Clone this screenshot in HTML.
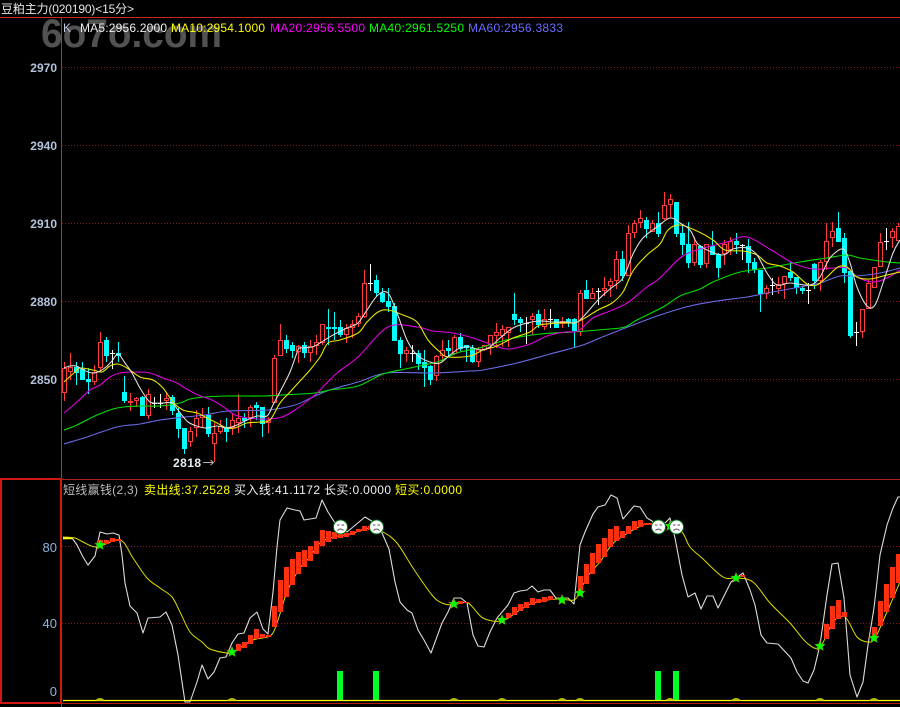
<!DOCTYPE html>
<html lang="zh"><head><meta charset="utf-8"><title>豆粕主力</title>
<style>
html,body{margin:0;padding:0;background:#000;width:900px;height:707px;overflow:hidden}
svg{display:block}
text{font-family:"Liberation Sans","Noto Sans CJK SC",sans-serif;font-size:12px}
.y{font-weight:bold;fill:#b4c4dc;text-anchor:end}
.l{fill:#8fb4e0;text-anchor:end;font-size:13px}
</style></head><body>
<svg id="s" xmlns="http://www.w3.org/2000/svg" width="900" height="707" viewBox="0 0 900 707">
<rect width="900" height="707" fill="#000"/>
<text x="41" y="47" textLength="181" lengthAdjust="spacingAndGlyphs" style="font-size:40px;font-weight:bold" fill="#525252">6o7o.com</text>
<g stroke="#7c1c1c" stroke-dasharray="1 2" stroke-width="1">
<path d="M62 67.5H900M62 145.5H900M62 223.5H900M62 301.5H900M62 379.5H900M62 546.5H900M62 623.5H900"/>
</g>
<g id="candles"></g>
<g fill="none" stroke-width="1.1" stroke-linejoin="round">
<polyline class="sm" stroke="#6a6ae6" points="64,444 87,437 117,427 140,424 160,420 185,417 205,415 228,411 268,410 295,405 315,396 330,390 358,382 387,373 433,373 470,371 483,370 517,363 550,354 583,345 600,338 633,325 660,315 690,306 717,301 747,297 767,293 800,287 820,283 840,276 857,276 880,273 900,268"/>
<polyline class="sm" stroke="#00e000" points="64,430 77,425 97,415 117,408 140,406 160,406 180,403 190,399 205,397 228,396 262,396 282,395 315,393 330,390 358,386 383,374 410,368 437,362 450,356 460,352 483,347 510,339 540,334 573,332 610,329 625,327 637,320 663,307 680,296 700,289 713,282 740,272 767,268 800,262 827,258 847,255 860,258 887,262 900,263"/>
<polyline class="sm" stroke="#e000e0" points="64,413 77,402 90,390 100,385 110,377 120,373 137,372 150,373 163,378 177,383 185,388 198,395 212,400 225,408 235,415 248,418 268,419 282,417 295,410 315,395 320,390 337,373 358,357 388,327 417,327 433,331 453,333 473,338 493,345 508,349 530,344 547,336 565,332 578,331 593,318 610,311 627,303 647,287 660,278 680,258 697,250 727,242 747,237 773,251 793,263 813,269 833,268 847,268 857,277 873,282 887,278 900,270"/>
<polyline class="sm" stroke="#e8e800" points="64,382 75,372 80,368 93,370 102,372 110,366 118,364 127,368 140,377 153,380 163,388 173,402 183,410 197,413 207,418 217,423 227,428 235,428 247,423 260,422 270,420 280,403 290,392 300,381 310,370 320,357 328,343 340,340 358,333 367,322 378,312 388,310 403,315 417,322 428,340 440,352 448,357 470,356 483,350 497,346 513,338 530,332 540,325 560,323 577,322 598,310 612,303 623,292 633,271 647,255 660,244 668,230 680,225 697,231 713,240 725,250 743,251 757,255 767,263 780,266 793,272 807,284 817,285 827,277 838,267 847,267 857,277 870,279 887,275 900,272"/>
<polyline class="sm" stroke="#dcdcdc" points="64,368 70,366 76,366 82,369 88,372 94,373 100,371 106,367 112,361 118,354 125,363 132,373 140,388 148,400 153,403 163,403 172,403 178,410 188,422 200,427 207,428 217,426 227,428 237,425 247,420 257,416 267,416 273,405 282,388 290,372 298,350 300,348 312,347 320,343 333,335 347,328 358,323 367,310 378,295 388,293 397,313 407,340 417,355 430,362 440,363 450,355 460,348 470,347 480,350 490,347 500,338 513,328 527,323 540,321 553,322 567,322 575,323 583,317 598,300 610,289 623,278 633,254 643,238 657,227 670,218 680,223 690,230 697,243 707,250 723,255 733,249 747,248 757,255 767,273 777,285 790,283 810,285 820,277 830,258 843,249 850,263 857,287 867,306 875,305 883,283 893,253 900,240"/>
</g>
<g fill="none" shape-rendering="crispEdges">
<path d="M0 17.5H900" stroke="#c8281e"/>
<path d="M61.5 17V707" stroke="#c8281e"/>
<path d="M0 479.5H900M0 703.5H900" stroke="#b01e14"/>
<rect x="1" y="479" width="60" height="224" stroke="#d0180f" stroke-width="2"/>
</g>
<text x="1" y="13" textLength="133" fill="#e6e6e6">豆粕主力(020190)&lt;15分&gt;</text>
<text x="63" y="32" fill="#c4d0e0">K</text>
<text x="80" y="32" textLength="87" fill="#f0f0f0">MA5:2956.2000</text>
<text x="171" y="32" textLength="94" fill="#ffff00">MA10:2954.1000</text>
<text x="270" y="32" textLength="95" fill="#ff00ff">MA20:2956.5500</text>
<text x="369" y="32" textLength="95" fill="#00ff00">MA40:2961.5250</text>
<text x="468" y="32" textLength="95" fill="#6a6aff">MA60:2956.3833</text>
<text class="y" x="57" y="72">2970</text>
<text class="y" x="57" y="150">2940</text>
<text class="y" x="57" y="228">2910</text>
<text class="y" x="57" y="306">2880</text>
<text class="y" x="57" y="384">2850</text>
<text x="173" y="467" textLength="28" style="font-weight:bold" fill="#e4ecf4">2818</text>
<path d="M203 462.5H213M210.500 460L213.500 462.500L210.500 465" stroke="#b0b0b0" fill="none"/>
<text class="l" x="57" y="552">80</text>
<text class="l" x="57" y="628">40</text>
<text class="l" x="57" y="696">0</text>
<text x="63" y="494" textLength="75" fill="#bcbcbc">短线赢钱(2,3)</text>
<text x="144" y="494" textLength="86" fill="#ffff00">卖出线:37.2528</text>
<text x="234" y="494" textLength="86" fill="#f0f0f0">买入线:41.1172</text>
<text x="324" y="494" textLength="67" fill="#f0f0f0">长买:0.0000</text>
<text x="395" y="494" textLength="67" fill="#ffff00">短买:0.0000</text>
<polyline fill="none" stroke="#dcdcdc" stroke-width="1.100" stroke-linejoin="round" points="63,538 72,538 77,545 83,557 88,565 95,556 100,532 107,534 113,533 119,535 122,555 125,583 130,606 137,613 143,633 148,618 160,617 166,612 172,625 178,655 185,702 190,702 197,682 202,665 208,679 214,672 220,658 226,657 232,643 238,634 244,633 250,618 257,612 263,629 268,634 273,592 277,547 280,520 287,508 295,510 300,511 304,520 316,518 322,500 328,512 335,523 347,532 365,517 375,523 382,533 389,549 395,582 400,602 407,610 412,613 418,630 424,640 431,653 442,623 448,612 454,598 461,598 467,603 473,635 478,646 484,647 490,632 497,618 508,605 514,593 520,591 527,590 532,586 538,592 544,590 550,590 556,598 568,598 574,604 580,545 585,532 593,514 598,507 605,505 611,495 617,498 623,519 634,506 640,507 647,518 652,521 658,527 665,523 670,518 675,538 682,575 688,597 695,593 701,609 707,596 713,596 718,608 731,582 743,573 750,590 755,605 761,635 767,643 778,644 791,658 797,672 803,681 808,683 814,670 820,645 827,595 832,564 838,563 844,598 850,675 857,697 863,682 868,645 874,608 880,555 887,525 893,508 898,497 900,497"/>
<polyline class="sm" fill="none" stroke="#dcdc00" stroke-width="1" stroke-linejoin="round" points="63,537 75,538 83,542 97,547 120,540 133,558 147,578 160,588 172,597 180,612 190,632 202,642 210,649 227,653 233,652 253,640 270,636 277,623 287,592 300,568 310,557 320,543 333,537 350,534 370,528 383,532 397,543 413,568 432,595 442,603 453,605 468,603 483,618 502,621 517,612 533,603 557,599 574,600 580,590 590,573 600,562 610,547 620,538 643,525 655,524 670,526 682,532 690,547 702,558 723,577 737,578 753,582 770,603 790,623 807,643 820,647 833,622 845,617 857,637 868,642 875,638 887,612 900,582"/>
<path d="M63 538.500H72" stroke="#ffff00" stroke-width="1.500"/>
<g id="bars" fill="#ff3010"></g>
<g fill="#00ff22">
<rect x="337" y="671" width="6" height="30"/><rect x="373" y="671" width="6" height="30"/><rect x="655" y="671" width="6" height="30"/><rect x="673" y="671" width="6" height="30"/>
</g>
<path d="M63 700.500H900" stroke="#ffff00" stroke-width="1.300"/>
<path id="bumps" fill="#b8b800" stroke="none"/>
<g id="stars" fill="#00ff00" stroke="#d03010" stroke-width=".3"></g>
<g id="faces"></g>
</svg>
<script>
var NS="http://www.w3.org/2000/svg";
function el(p,t,a){var e=document.createElementNS(NS,t);for(var k in a)e.setAttribute(k,a[k]);document.getElementById(p).appendChild(e);return e}
Array.prototype.slice.call(document.querySelectorAll("polyline.sm")).forEach(function(pl){
 var P=pl.getAttribute("points").split(" ").map(function(s){return s.split(",").map(Number)}),d="M"+P[0][0]+" "+P[0][1];
 for(var i=0;i<P.length-1;i++){var a=P[Math.max(i-1,0)],b=P[i],c=P[i+1],e=P[Math.min(i+2,P.length-1)];
  d+="C"+(b[0]+(c[0]-a[0])/6).toFixed(1)+" "+(b[1]+(c[1]-a[1])/6).toFixed(1)+" "+(c[0]-(e[0]-b[0])/6).toFixed(1)+" "+(c[1]-(e[1]-b[1])/6).toFixed(1)+" "+c[0]+" "+c[1]}
 var n=document.createElementNS(NS,"path");n.setAttribute("d",d);n.setAttribute("fill","none");n.setAttribute("stroke",pl.getAttribute("stroke"));
 n.setAttribute("stroke-width",pl.getAttribute("stroke-width")||"1.1");pl.parentNode.replaceChild(n,pl)});
var C="r362,368,393,401 r353,367,372,380 c362,367,373,385 c362,369,380,380 c368,379,382,394 r365,372,382,385 r332,342,368,372 c337,340,356,362 w350,353,369 c342,353,356,362 c376,392,401,403 r393,401,403,411 r397,398,401,407 c396,397,416,416 r389,394,416,419 w397,403,408 w394,403,408 r393,398,401,410 c395,397,411,415 c408,413,429,438 c428,428,449,454 r427,431,442,447 r410,418,428,437 r408,415,418,428 c407,415,434,437 r423,433,444,462 r420,426,432,434 c418,427,432,442 r413,420,428,435 r394,418,423,433 c413,418,421,428 r405,407,418,427 c402,405,408,420 c407,407,424,437 r417,420,423,433 r355,358,403,403 r324,340,356,356 c335,340,349,353 c342,345,351,358 r345,346,352,363 c342,345,353,358 r340,346,353,362 r335,342,346,355 r324,324,343,345 c309,327,329,345 c312,327,329,340 c320,327,335,337 r324,328,335,343 r320,324,328,338 r313,316,324,327 r270,283,317,318 w264,283,291 c275,280,293,297 c288,293,302,303 c288,301,307,312 c303,306,341,341 c337,340,354,368 r347,350,354,362 w345,353,362 c350,353,364,370 c350,362,368,387 c365,366,380,385 r355,356,376,381 r340,350,356,362 c340,348,351,357 r335,337,354,355 c333,337,349,351 c345,345,348,362 c345,348,362,363 r347,349,362,367 r345,345,350,351 r335,335,345,355 r323,332,336,348 r325,329,336,347 r327,327,333,347 c293,314,320,325 c317,319,323,332 w317,323,344 r313,316,320,335 c310,314,325,328 r309,319,327,330 w309,319,328 c320,319,328,328 r317,321,324,328 c318,319,323,327 c318,319,331,347 r290,293,332,336 c280,290,299,299 r288,293,299,299 w288,291,305 r277,288,291,296 r278,281,286,297 r251,259,281,289 c251,259,276,281 r225,233,276,276 r220,223,233,238 r210,218,223,228 c217,220,229,238 r220,223,232,232 c212,223,234,237 r192,205,219,220 r194,199,205,217 c202,202,234,237 c224,233,245,255 c222,244,263,268 r237,244,263,266 c245,246,265,268 r244,244,264,268 c231,246,255,255 c253,254,268,278 r240,244,254,265 r237,241,250,255 c233,241,245,254 w244,245,260 c239,246,263,273 c258,262,270,273 c270,270,294,312 r285,288,294,299 w278,285,295 r277,284,289,294 r277,276,284,299 c262,272,278,281 c277,277,288,294 c287,288,291,294 w283,290,304 c263,264,281,289 r260,262,281,291 r223,241,262,270 r222,231,238,247 c212,228,242,242 c233,238,273,283 c270,271,336,338 w322,332,346 r309,309,332,338 r280,283,309,309 r267,267,288,288 r233,242,267,267 w228,241,250 r228,231,238,248 r223,226,241,241".split(" ");
var g="candles";
C.forEach(function(s,i){var x=64+6*i,t=s[0],v=s.slice(1).split(",").map(Number);
 if(t=="w"){el(g,"path",{d:"M"+(x+.5)+" "+v[0]+"V"+v[2]+"M"+(x-2)+" "+(v[1]+.5)+"h5",stroke:"#fff",fill:"none"});return}
 var col=t=="r"?"#ff3a3a":"#00ffff";
 el(g,"path",{d:"M"+(x+.5)+" "+v[0]+"V"+v[1]+"M"+(x+.5)+" "+v[2]+"V"+v[3],stroke:col,fill:"none"});
 if(t=="r")el(g,"rect",{x:x-1.5,y:v[1]+.5,width:4,height:Math.max(v[2]-v[1]-1,1),fill:"#000",stroke:col});
 else el(g,"rect",{x:x-2,y:v[1],width:5,height:Math.max(v[2]-v[1],1),fill:col});
});
var B="100,540,545 106,540,544 112,538,542 118,539,541 238,644,651 244,642,648 250,635,644 256,629,639 262,634,638 268,635,637 274,606,627 280,580,612 286,567,597 292,559,585 298,552,574 304,550,567 310,546,561 316,541,554 322,530,546 328,531,542 334,532,539 340,534,538 346,533,537 352,531,535 358,529,532 364,526,531 370,526,530 460,601,604 466,602,603 508,613,618 514,607,615 520,604,611 526,602,608 532,598,605 538,599,603 544,597,602 550,596,600 580,576,595 586,564,584 592,553,574 598,544,563 604,538,557 610,529,547 616,526,541 622,531,538 628,526,534 634,521,530 640,520,527 646,523,525 652,523,525 742,575,577 826,624,639 832,606,629 838,600,619 844,612,617 874,627,638 880,601,626 886,584,612 892,567,598 898,554,583".split(" ");
B.forEach(function(s){var v=s.split(",").map(Number);el("bars","rect",{x:v[0]-2,y:v[1],width:5,height:v[2]-v[1]})});
var S=[[100,545],[232,652],[454,604],[502,620],[562,600],[580,593],[670,526],[736,578],[820,646],[874,638]],d="";
S.forEach(function(p){d+="M"+(p[0]-5)+" 700.500Q"+p[0]+" 695.500 "+(p[0]+5)+" 700.500Z";
 var pts=[];for(var i=0;i<10;i++){var r=i%2?2.6:5.800,a=-Math.PI/2+i*Math.PI/5;pts.push((p[0]+r*Math.cos(a)).toFixed(1)+","+(p[1]+r*Math.sin(a)).toFixed(1))}
 el("stars","polygon",{points:pts.join(" ")})});
document.getElementById("bumps").setAttribute("d",d);
[[340.500,527],[376.500,527],[658.500,527],[676.500,527]].forEach(function(p){var x=p[0],y=p[1];
 el("faces","circle",{cx:x,cy:y,r:7,fill:"#fff",stroke:"#007a10","stroke-width":1});
 el("faces","path",{d:"M"+(x-3.5)+" "+(y-2)+"h2.500M"+(x+1)+" "+(y-2)+"h2.500M"+(x-3)+" "+(y+3.500)+"Q"+x+" "+(y+.5)+" "+(x+3)+" "+(y+3.500),stroke:"#555",fill:"none","stroke-width":1});
});
</script>
</body></html>
